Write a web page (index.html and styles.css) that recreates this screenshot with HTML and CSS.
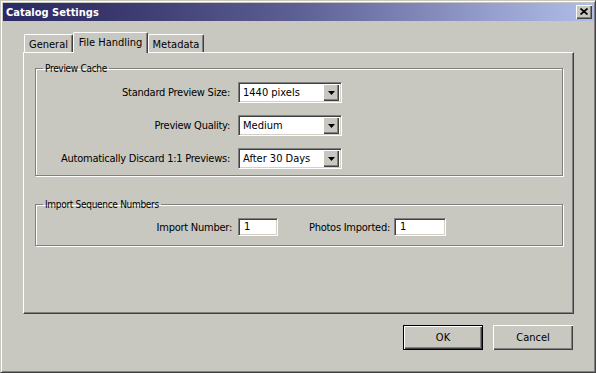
FILE: index.html
```html
<!DOCTYPE html>
<html lang="en">
<head>
    <meta charset="UTF-8">
    <title>Catalog Settings</title>
    <link rel="stylesheet" href="styles.css">
</head>
<body>
    <div class="window">
        <div class="titlebar">
            <span class="title">Catalog Settings</span>
            <span class="close">
                <svg width="8" height="7" viewBox="0 0 8 7">
                    <path d="M0.5 0.5 L7.5 6.5 M7.5 0.5 L0.5 6.5" stroke="#000" stroke-width="1.7" fill="none"/>
                </svg>
            </span>
        </div>

        <div class="content">
            <div class="tabs">
                <div class="tab tab-general">General</div>
                <div class="tab tab-files active">File Handling</div>
                <div class="tab tab-meta">Metadata</div>
            </div>

            <div class="panel">
                <fieldset class="group group-cache">
                    <legend>Preview Cache</legend>
                    <div class="form-grid">
                        <label>Standard Preview Size:</label>
                        <div class="combo"><span class="combo-value">1440 pixels</span><span class="combo-btn"><svg width="7" height="4" viewBox="0 0 7 4"><path d="M0 0 H7 L3.5 4 Z" fill="#000"/></svg></span></div>

                        <label>Preview Quality:</label>
                        <div class="combo"><span class="combo-value">Medium</span><span class="combo-btn"><svg width="7" height="4" viewBox="0 0 7 4"><path d="M0 0 H7 L3.5 4 Z" fill="#000"/></svg></span></div>

                        <label>Automatically Discard 1:1 Previews:</label>
                        <div class="combo"><span class="combo-value">After 30 Days</span><span class="combo-btn"><svg width="7" height="4" viewBox="0 0 7 4"><path d="M0 0 H7 L3.5 4 Z" fill="#000"/></svg></span></div>
                    </div>
                </fieldset>

                <fieldset class="group group-import">
                    <legend>Import Sequence Numbers</legend>
                    <div class="import-row">
                        <label class="num-label">Import Number:</label>
                        <div class="field field-num">1</div>
                        <label class="photos-label">Photos Imported:</label>
                        <div class="field field-photos">1</div>
                    </div>
                </fieldset>
            </div>

            <div class="buttons">
                <div class="btn btn-default">OK</div>
                <div class="btn">Cancel</div>
            </div>
        </div>
    </div>
</body>
</html>
```

FILE: styles.css
```css
body {
    margin: 0;
    font-family: "DejaVu Sans Condensed", "Liberation Sans", sans-serif;
    font-size: 11px;
    color: #000;
    background: #c9c8c0;
}
.window {
    width: 596px;
    height: 373px;
    box-sizing: border-box;
    background: #c9c8c0;
    border: 1px solid;
    border-color: #c9c8c0 #404040 #404040 #c9c8c0;
    box-shadow: inset 1px 1px #fff, inset -1px -1px #808080;
    padding: 2px 1px 1px 2px;
    display: flex;
    flex-direction: column;
}
.titlebar {
    height: 18px;
    display: flex;
    align-items: center;
    justify-content: space-between;
    padding: 0 2px 0 2px;
    background: linear-gradient(to right, #2c2a66, #363468 16%, #5d6094 50%, #98a1cf 84%, #b0bde8);
}
.title {
    color: #fff;
    font-weight: bold;
    font-size: 11px;
    padding-left: 1px;
}
.close {
    width: 16px;
    height: 14px;
    box-sizing: border-box;
    background: #c9c8c0;
    box-shadow: inset 1px 1px #fff, inset -1px -1px #404040, inset -2px -2px #808080;
    display: flex;
    align-items: center;
    justify-content: center;
    padding: 0 1px 1px 0;
}
.content {
    padding: 0 20px;
    flex: 1;
}
.tabs {
    display: flex;
    align-items: flex-end;
    height: 20px;
    margin-top: 11px;
    padding-left: 1px;
}
.tab {
    height: 18px;
    box-sizing: border-box;
    display: flex;
    align-items: center;
    justify-content: center;
    border-top: 1px solid #fff;
    border-left: 1px solid #fff;
    border-right: 1px solid #404040;
    border-radius: 2px 2px 0 0;
    box-shadow: inset -1px 0 #808080;
    padding-top: 1px;
}
.tab-general { width: 49px; }
.tab-files { width: 75px; }
.tab-meta { width: 56px; }
.tab.active {
    height: 21px;
    margin-bottom: -1px;
    padding-bottom: 2px;
    position: relative;
    z-index: 1;
    background: #c9c8c0;
}
.panel {
    height: 262px;
    box-sizing: border-box;
    border: 1px solid;
    border-color: #fff #404040 #404040 #fff;
    box-shadow: inset -1px -1px #808080;
    padding: 0 10px 0 11px;
    display: flow-root;
}
.group {
    margin: 0;
    padding: 0;
    border: 1px solid #808080;
    box-shadow: inset 1px 1px #fff, 1px 1px #fff;
    min-width: 0;
}
.group legend {
    margin-left: 7px;
    padding: 0 2px;
    line-height: 13px;
    font-size: 10px;
    letter-spacing: -0.3px;
}
.group-cache {
    margin-top: 9px;
    padding: 7px 0 6px;
}
.group-import {
    margin-top: 22px;
    padding: 7px 0 9px;
}
.form-grid {
    display: grid;
    grid-template-columns: 194px 104px;
    column-gap: 8px;
    row-gap: 12px;
    align-items: center;
}
.form-grid label,
.import-row label {
    text-align: right;
    letter-spacing: -0.25px;
}
.combo {
    height: 21px;
    box-sizing: border-box;
    background: #fff;
    border: 1px solid;
    border-color: #808080 #fff #fff #808080;
    box-shadow: inset 1px 1px #404040, inset -1px -1px #d4d0c8;
    display: flex;
    align-items: center;
    padding: 2px;
}
.combo-value {
    flex: 1;
    padding-left: 2px;
}
.combo-btn {
    width: 16px;
    height: 17px;
    box-sizing: border-box;
    background: #c9c8c0;
    box-shadow: inset 1px 1px #fff, inset -1px -1px #404040, inset -2px -2px #808080;
    display: flex;
    align-items: center;
    justify-content: center;
}
.import-row {
    display: flex;
    align-items: center;
}
.num-label {
    width: 196px;
    margin-right: 6px;
}
.photos-label {
    width: 112px;
    margin-right: 4px;
}
.field {
    height: 18px;
    box-sizing: border-box;
    background: #fff;
    border: 1px solid;
    border-color: #808080 #fff #fff #808080;
    box-shadow: inset 1px 1px #404040, inset -1px -1px #d4d0c8;
    padding-left: 5px;
    line-height: 16px;
}
.field-num { width: 40px; }
.field-photos { width: 52px; }
.buttons {
    display: flex;
    justify-content: flex-end;
    gap: 10px;
    margin-top: 11px;
    padding-right: 1px;
}
.btn {
    width: 80px;
    height: 25px;
    box-sizing: border-box;
    display: flex;
    align-items: center;
    justify-content: center;
    box-shadow: inset 1px 1px #fff, inset -1px -1px #404040, inset -2px -2px #808080;
    font-size: 11px;
}
.btn-default {
    border: 1px solid #000;
}
```
